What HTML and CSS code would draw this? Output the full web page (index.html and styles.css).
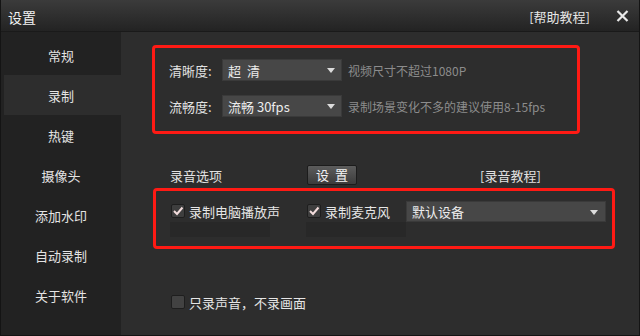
FILE: index.html
```html
<!DOCTYPE html>
<html>
<head>
<meta charset="utf-8">
<link rel="stylesheet" href="styles.css">
</head>
<body>
<div class="window">
  <div class="titlebar">
    <span class="title">设置</span>
    <span class="help">[帮助教程]</span>
    <svg class="close" width="13" height="12" viewBox="0 0 13 12"><path d="M1.5 1 L11.5 11 M11.5 1 L1.5 11" stroke="#e8e8e8" stroke-width="2.2"/></svg>
  </div>
  <div class="main">
    <div class="sidebar">
      <div class="nav">常规</div>
      <div class="nav active">录制</div>
      <div class="nav">热键</div>
      <div class="nav">摄像头</div>
      <div class="nav">添加水印</div>
      <div class="nav">自动录制</div>
      <div class="nav">关于软件</div>
    </div>
    <div class="content">
      <div class="redbox box1">
        <div class="row">
          <span class="label">清晰度:</span>
          <div class="select sel1"><span class="wide">超 清</span><i class="arrow"></i></div>
          <span class="hint">视频尺寸不超过1080P</span>
        </div>
        <div class="row">
          <span class="label">流畅度:</span>
          <div class="select sel1"><span>流畅 30fps</span><i class="arrow"></i></div>
          <span class="hint">录制场景变化不多的建议使用8-15fps</span>
        </div>
      </div>
      <div class="audio-head">
        <span class="audio-label">录音选项</span>
        <button class="btn">设 置</button>
        <span class="audio-help">[录音教程]</span>
      </div>
      <div class="redbox box2">
        <div class="group">
          <label class="check"><span class="cb checked"><svg width="12" height="12" viewBox="0 0 12 12"><path d="M2 6 L5 9 L10.5 2.5" fill="none" stroke="#f3dcdc" stroke-width="2"/></svg></span>录制电脑播放声</label>
          <div class="bar"></div>
        </div>
        <div class="group">
          <label class="check"><span class="cb checked"><svg width="12" height="12" viewBox="0 0 12 12"><path d="M2 6 L5 9 L10.5 2.5" fill="none" stroke="#f3dcdc" stroke-width="2"/></svg></span>录制麦克风</label>
          <div class="bar"></div>
        </div>
        <div class="select sel2"><span>默认设备</span><i class="arrow"></i></div>
      </div>
      <label class="check only"><span class="cb"></span>只录声音，不录画面</label>
    </div>
  </div>
</div>
</body>
</html>
```

FILE: styles.css
```css
* { box-sizing: border-box; }
html, body { margin: 0; padding: 0; background: #1b1b1b; }
body { font-family: "Noto Sans CJK SC", "DejaVu Sans", sans-serif; }
.window {
  width: 640px; height: 336px;
  border: 1px solid #141414;
  border-top: none;
  display: flex; flex-direction: column;
  background: #2d2d2d;
  overflow: hidden;
}
.titlebar {
  height: 32px; flex: none;
  display: flex; align-items: center;
  padding: 0 0 0 7px;
  background: linear-gradient(#3b3b3b, #232323);
  border-bottom: 1px solid #1a1a1a;
  color: #f2f2f2;
}
.title { font-size: 14px; line-height: 16px; margin-top: 2px; }
.help { margin-left: auto; font-size: 13px; line-height: 15px; color: #e6e6e6; margin-top: 1px; }
.close { margin: 1px 10px 0 26px; }
.main { flex: 1; display: flex; }
.sidebar {
  width: 120px; flex: none;
  background: #222222;
  padding-top: 3px;
}
.nav {
  height: 40px; margin-left: 3px;
  display: flex; align-items: center; justify-content: center;
  font-size: 13px; color: #e4e4e4;
  padding-right: 3px;
}
.nav.active { background: #2d2d2d; }
.content { flex: 1; padding: 13px 0 0 31px; color: #e0e0e0; font-size: 13px; }
.redbox { border: 3px solid #ff1a14; border-radius: 4px; }
.box1 {
  width: 428px; height: 89px;
  padding: 11px 0 0 14px;
  display: flex; flex-direction: column; gap: 14px;
}
.row { display: flex; align-items: center; height: 22px; white-space: nowrap; }
.label { width: 53px; font-size: 13px; color: #e2e2e2; }
.select {
  position: relative;
  background: #474747;
  border: 1px solid #3a3a3a;
  display: flex; align-items: center;
  padding-left: 5px;
  color: #ececec; font-size: 13px;
  white-space: nowrap;
}
.wide { word-spacing: 3px; }
.sel1 { width: 120px; height: 22px; }
.arrow {
  position: absolute; right: 6px; top: 50%; margin-top: -2px;
  width: 0; height: 0;
  border-left: 4px solid transparent; border-right: 4px solid transparent;
  border-top: 5px solid #dcdcdc;
}
.hint { margin-left: 6px; font-size: 12px; color: #8c8c8c; }
.audio-head { display: flex; align-items: center; height: 20px; margin-top: 31px; padding-left: 18px; white-space: nowrap; }
.audio-label { width: 137px; font-size: 13px; color: #e2e2e2; }
.btn {
  width: 50px; height: 20px; padding: 0;
  background: linear-gradient(#5c5c5c, #3c3c3c);
  border: 1px solid #1c1c1c; border-radius: 2px;
  color: #f4f4f4; font-family: inherit; font-size: 13px; line-height: 16px;
  word-spacing: 3px;
}
.audio-help { margin-left: 123px; font-size: 13px; color: #e2e2e2; }
.box2 {
  margin: 3px 0 0 1px;
  width: 462px; height: 61px;
  padding: 10px 0 0 14px;
  display: flex; align-items: flex-start;
}
.group { width: 100px; flex: none; display: flex; flex-direction: column; }
.group + .group { margin-left: 36px; }
.check { display: flex; align-items: center; height: 20px; font-size: 13px; color: #e6e6e6; white-space: nowrap; }
.cb {
  width: 14px; height: 14px; flex: none;
  margin: 0 4px 0 1px;
  background: #3e3e3e; border: 1px solid #1e1e1e; border-radius: 2px;
  display: flex; align-items: center; justify-content: center;
}
.bar { height: 15px; background: #282828; margin-top: 1px; }
.sel2 { width: 200px; height: 21px; flex: none; }
.sel2 .arrow { right: 7px; }
.only { margin: 43px 0 0 18px; }
.only .cb { background: #424242; }
```
